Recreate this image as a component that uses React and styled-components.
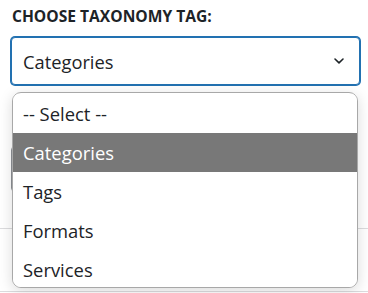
import React from "react";
import styled, { createGlobalStyle } from "styled-components";

const Global = createGlobalStyle`
  html, body { margin: 0; padding: 0; background: #fff; }
  body { font-family: "Open Sans", "Noto Sans", sans-serif; color: #1d2327; }
  * { box-sizing: border-box; }
`;

const Page = styled.div`
  position: relative;
  width: 368px;
  height: 293px;
  overflow: hidden;
  padding: 5px 0 0 11px;
`;

const Label = styled.div`
  font-size: 15.6px;
  font-weight: 700;
  line-height: 22px;
  padding-left: 1px;
  color: #1d2327;
`;

const Select = styled.div`
  margin-top: 10px;
  width: 349px;
  height: 48px;
  border: 1px solid ${(p) => (p.$focused ? "#2271b1" : "#8c8f94")};
  box-shadow: ${(p) => (p.$focused ? "0 0 0 1px #2271b1" : "none")};
  border-radius: 4px;
  display: flex;
  align-items: center;
  justify-content: space-between;
  padding: 0 14px 0 11px;
  font-size: 18.3px;
  color: #1d2327;
  background: #fff;
`;

const Behind = styled.div`
  display: flex;
  flex-direction: column;
`;

const Marker = styled.div`
  width: 2px;
  height: ${(p) => p.$h}px;
  margin-top: ${(p) => p.$mt}px;
  margin-left: 1px;
  background: #c98a3a;
`;

const GhostBox = styled.div`
  margin-top: 20px;
  width: 347px;
  height: 46px;
  border: 1px solid #8c8f94;
  border-radius: 4px;
`;

const Rule = styled.div`
  margin-left: -11px;
  width: 368px;
  height: 1px;
  margin-top: ${(p) => p.$mt}px;
  background: #dcdcde;
`;

const Popup = styled.div`
  position: absolute;
  left: 12px;
  top: 92px;
  width: 346px;
  height: 196px;
  border: 1px solid #a8a8a8;
  border-radius: 9px;
  background: #fff;
  box-shadow: 0 3px 14px rgba(0, 0, 0, 0.15);
  overflow: hidden;
  padding-top: 1px;
`;

const Option = styled.div`
  height: 39px;
  display: flex;
  align-items: center;
  padding-left: 10px;
  font-size: 18.4px;
  color: ${(p) => (p.$active ? "#fff" : "#1d2327")};
  background: ${(p) => (p.$active ? "#787878" : "#fff")};
`;

const Chevron = () => (
  <svg width="12" height="8" viewBox="0 0 12 8" fill="none">
    <path d="M2 2 L6 5.8 L10 2" stroke="#1d2327" strokeWidth="1.6" strokeLinecap="round" strokeLinejoin="round" />
  </svg>
);

const options = ["-- Select --", "Categories", "Tags", "Formats", "Services"];

export default function App() {
  return (
    <Page>
      <Global />
      <Label>CHOOSE TAXONOMY TAG:</Label>
      <Select $focused>
        <span>Categories</span>
        <Chevron />
      </Select>
      <Behind>
        <Marker $mt={33} $h={8} />
        <GhostBox />
        <Rule $mt={36} />
        <Marker $mt={27} $h={10} />
        <Rule $mt={25} />
      </Behind>
      <Popup>
        {options.map((o) => (
          <Option key={o} $active={o === "Categories"}>
            {o}
          </Option>
        ))}
      </Popup>
    </Page>
  );
}
